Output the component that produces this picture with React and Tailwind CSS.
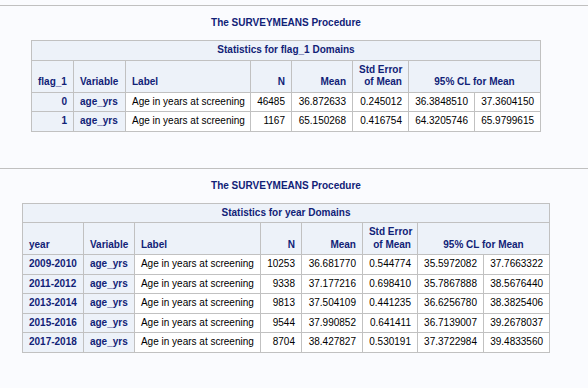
import React from "react";

const B = "border border-[#c1c1c1]";
const TH = `${B} bg-[#edf2f9] text-[#112277] font-bold px-[6px] py-[3px] align-bottom whitespace-nowrap`;
const RH = `${B} bg-[#edf2f9] text-[#112277] font-bold px-[6px] py-[3px] whitespace-nowrap`;
const TD = `${B} bg-white text-black px-[6px] py-[3px] whitespace-nowrap`;

function Section({ domain, firstCol, firstAlign, widths, rows, tableW }) {
  return (
    <div className="border-t border-[#c0c0c0]">
      <div className="w-[572px] flex flex-col items-center pt-[10px] pb-[36px]">
        <div className="h-[13px] leading-[13px] font-bold text-[#112277] mb-[11px]">
          The SURVEYMEANS Procedure
        </div>
        <table
          className={`table-fixed border-collapse ${B} ${tableW}`}
        >
          <colgroup>
            {widths.map((w, i) => (
              <col key={i} className={w} />
            ))}
          </colgroup>
          <thead>
            <tr>
              <th colSpan={8} className={`${TH} text-center align-middle`}>
                Statistics for {domain} Domains
              </th>
            </tr>
            <tr>
              <th className={`${TH} text-left`}>{firstCol}</th>
              <th className={`${TH} text-left`}>Variable</th>
              <th className={`${TH} text-left`}>Label</th>
              <th className={`${TH} text-right`}>N</th>
              <th className={`${TH} text-right`}>Mean</th>
              <th className={`${TH} text-right`}>
                Std Error
                <br />
                of Mean
              </th>
              <th colSpan={2} className={`${TH} text-center`}>
                95% CL for Mean
              </th>
            </tr>
          </thead>
          <tbody>
            {rows.map((r, i) => (
              <tr key={i}>
                <th className={`${RH} ${firstAlign}`}>{r[0]}</th>
                <th className={`${RH} text-left`}>age_yrs</th>
                <td className={`${TD} text-left`}>Age in years at screening</td>
                <td className={`${TD} text-right`}>{r[1]}</td>
                <td className={`${TD} text-right`}>{r[2]}</td>
                <td className={`${TD} text-right`}>{r[3]}</td>
                <td className={`${TD} text-right`}>{r[4]}</td>
                <td className={`${TD} text-right`}>{r[5]}</td>
              </tr>
            ))}
          </tbody>
        </table>
      </div>
    </div>
  );
}

export default function App() {
  return (
    <div className="w-[588px] h-[388px] overflow-hidden bg-[#fafbfe] pt-[5px] font-['Liberation_Sans',Arial,sans-serif] text-[10px] leading-[12.5px]">
      <Section
        domain="flag_1"
        firstCol="flag_1"
        firstAlign="text-right"
        tableW="w-[510px]"
        widths={[
          "w-[42px]",
          "w-[52px]",
          "w-[125px]",
          "w-[41px]",
          "w-[61px]",
          "w-[56px]",
          "w-[66px]",
          "w-[66px]",
        ]}
        rows={[
          ["0", "46485", "36.872633", "0.245012", "36.3848510", "37.3604150"],
          ["1", "1167", "65.150268", "0.416754", "64.3205746", "65.9799615"],
        ]}
      />
      <Section
        domain="year"
        firstCol="year"
        firstAlign="text-left"
        tableW="w-[528px]"
        widths={[
          "w-[61px]",
          "w-[51px]",
          "w-[126px]",
          "w-[41px]",
          "w-[61px]",
          "w-[55px]",
          "w-[66px]",
          "w-[66px]",
        ]}
        rows={[
          ["2009-2010", "10253", "36.681770", "0.544774", "35.5972082", "37.7663322"],
          ["2011-2012", "9338", "37.177216", "0.698410", "35.7867888", "38.5676440"],
          ["2013-2014", "9813", "37.504109", "0.441235", "36.6256780", "38.3825406"],
          ["2015-2016", "9544", "37.990852", "0.641411", "36.7139007", "39.2678037"],
          ["2017-2018", "8704", "38.427827", "0.530191", "37.3722984", "39.4833560"],
        ]}
      />
      <div className="border-t border-[#c0c0c0]" />
    </div>
  );
}
